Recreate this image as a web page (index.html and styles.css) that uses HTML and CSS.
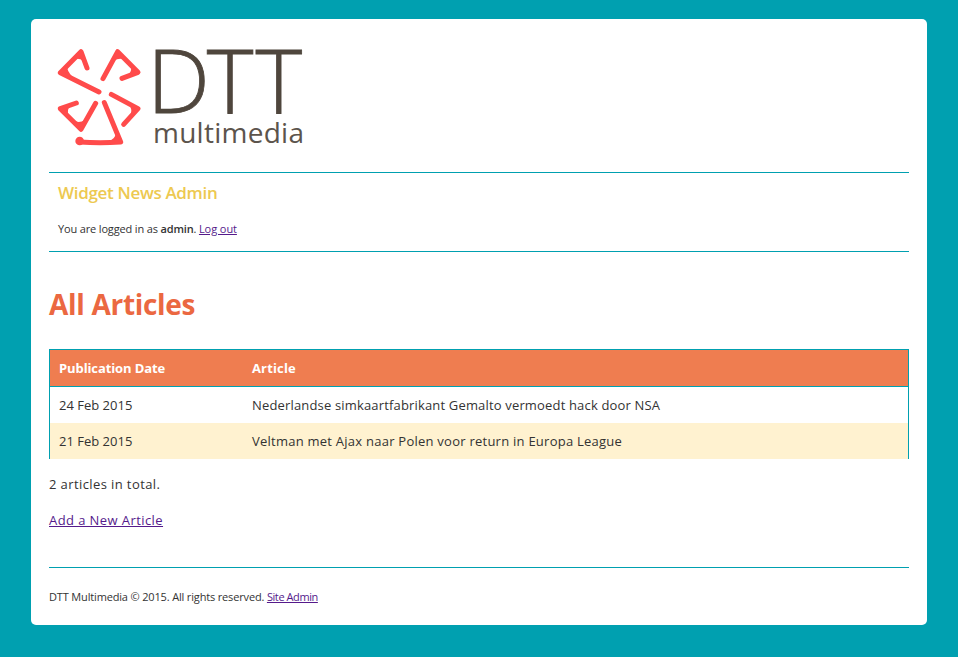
FILE: index.html
```html
<!DOCTYPE html>
<html lang="en">
<head>
<meta charset="utf-8">
<title>Widget News Admin</title>
<link rel="stylesheet" href="styles.css">
</head>
<body>
<div class="container">
  <a class="logo" href="#">
    <svg width="260" height="110" viewBox="0 0 260 110" role="img" aria-label="DTT multimedia">
      <g class="mark" transform="translate(-9 -5) scale(.33333)">
        <path d="M177 171L61 113L123 50L141 99"/>
        <path d="M189 131L233 50L294 112L246 130"/>
        <path d="M214 178L294 221L251 268"/>
        <path d="M109 204L61 221L123 283L167 205"/>
        <path d="M193 203L242 321Q180 325 119 321"/>
        <path class="joint" d="M61 113L79 95Q75 108 96 130ZM123 50L105 68Q121 65 131 74ZM233 50L220 74Q232 65 250 68ZM294 112L276 94Q281 106 270 121ZM294 221L272 209Q281 221 276 240ZM61 221L88 211Q75 223 82 242ZM123 283L102 262Q120 269 137 258ZM242 321L231 294Q231 315 205 323Z"/>
        <circle cx="119" cy="318" r="13"/>
      </g>
      <text class="name" x="98 157.8 206.6" y="73">DTT</text>
      <text class="tagline" x="104" y="103" textLength="151">multimedia</text>
    </svg>
  </a>
  <div class="admin-header">
    <h2>Widget News Admin</h2>
    <p>You are logged in as <b>admin</b>. <a href="#">Log out</a></p>
  </div>
  <h1>All Articles</h1>
  <table>
    <tr><th>Publication Date</th><th class="article">Article</th></tr>
    <tr><td>24 Feb 2015</td><td class="article">Nederlandse simkaartfabrikant Gemalto vermoedt hack door NSA</td></tr>
    <tr class="alt"><td>21 Feb 2015</td><td class="article">Veltman met Ajax naar Polen voor return in Europa League</td></tr>
  </table>
  <p class="total">2 articles in total.</p>
  <p class="add"><a href="#">Add a New Article</a></p>
  <div class="footer">DTT Multimedia © 2015. All rights reserved. <a href="#">Site Admin</a></div>
</div>
</body>
</html>
```
FILE: styles.css
```css
* { box-sizing: border-box; }
body {
  margin: 0;
  background: #00a0b0;
  color: #333;
  font-family: "Open Sans", sans-serif;
  font-size: 13px;
  line-height: 18px;
}
.container {
  width: 896px;
  height: 606px;
  margin: 19px 0 0 31px;
  padding: 21px 18px 0;
  background: #fff;
  border-radius: 5px;
}
.logo { display: block; height: 132px; }
.logo svg { display: block; overflow: visible; }
.mark path { fill: none; stroke: #ff4b4b; stroke-width: 15; stroke-linecap: round; stroke-linejoin: round; }
.mark .joint { fill: #ff4b4b; stroke-width: 8; }
.mark circle { fill: #ff4b4b; }
.name, .tagline { fill: #4f463d; stroke: #4f463d; }
.name { font-size: 89px; font-weight: 300; stroke-width: .8px; }
.tagline { font-size: 28px; fill: #5c544c; stroke: none; }
.admin-header {
  height: 80px;
  padding: 10px 9px 0;
  border-top: 1px solid #00a0b0;
  border-bottom: 1px solid #00a0b0;
  font-size: 11px;
}
.admin-header p { margin: 17px 0 0; letter-spacing: -.155px; }
.admin-header a { letter-spacing: -.07px; }
b { font-weight: 600; }
a { color: #551a8b; }
h2 { margin: 0; color: #edc951; font-size: 17px; line-height: 20px; font-weight: 600; letter-spacing: -.33px; }
h1 { margin: 34px 0 27px; color: #eb6841; font-size: 28px; line-height: 36px; font-weight: 700; letter-spacing: -.3px; }
table { width: 860px; border-spacing: 0; border: 1px solid #00a0b0; border-bottom: 0; table-layout: fixed; }
th, td { height: 36px; padding: 0 9px; text-align: left; }
th:first-child, td:first-child { width: 193px; }
th { height: 37px; background: #ef7d50; color: #fff; border-bottom: 1px solid #00a0b0; font-weight: 700; letter-spacing: -.1px; }
th.article { letter-spacing: .15px; }
td.article { letter-spacing: .165px; }
.alt td { background: #fff2d0; }
.alt td.article { letter-spacing: .245px; }
.total { margin: 16px 0 18px; letter-spacing: .4px; }
.add { margin: 0; letter-spacing: .42px; }
.footer { margin-top: 38px; padding-top: 20px; border-top: 1px solid #00a0b0; font-size: 11px; letter-spacing: -.16px; }
.footer a { letter-spacing: -.42px; }
```
